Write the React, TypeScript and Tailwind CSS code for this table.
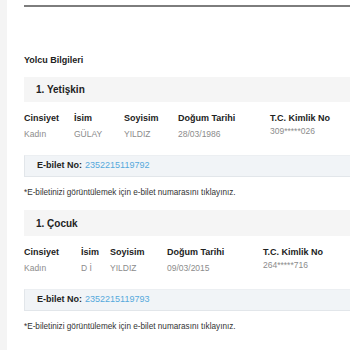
const font = { fontFamily: '"Liberation Sans", Arial, sans-serif' };

type Col = { label: string; value: string; width: string };

function PassengerBlock({ title, cols, ticket, bandH }: { title: string; cols: Col[]; ticket: string; bandH: string }) {
  return (
    <div>
      <div className={`mt-[11px] ${bandH} flex items-center pl-[12px] bg-[#f5f5f5]`}>
        <span className="text-[10px] font-bold text-[#222]">{title}</span>
      </div>
      <div className="flex mt-[10px]">
        {cols.map((c, i) => {
          const last = i === cols.length - 1;
          return (
            <div key={c.label} className={`${c.width} shrink-0 flex flex-col`}>
              <span className="text-[9px] leading-[12px] font-bold text-[#222] whitespace-nowrap">{c.label}</span>
              <span
                className={`text-[8.5px] leading-[12px] text-[#8c8c8c] whitespace-nowrap ${last ? "mt-[1px]" : "mt-[4px]"}`}
              >
                {c.value}
              </span>
            </div>
          );
        })}
      </div>
      <div className="mt-[15px] h-[22px] flex items-center pl-[12px] bg-[#f1f4f7] border border-r-0 border-[#e2e6ea] border-t-[#eceff2]">
        <span className="text-[9px] font-bold text-[#222]">E-bilet No:</span>
        <a className="ml-[3px] text-[9px] text-[#55a9dc] cursor-pointer">{ticket}</a>
      </div>
      <p className="mt-[10px] text-[8.2px] leading-[12px] text-[#333] whitespace-nowrap">
        *E-biletinizi görüntülemek için e-bilet numarasını tıklayınız.
      </p>
    </div>
  );
}

export default function App() {
  return (
    <div className="flex min-h-[350px] w-[350px] bg-white overflow-hidden" style={font}>
      <div className="w-[7px] shrink-0 bg-[#f4f4f4]" />
      <div className="flex-1 pl-[17px]">
        <div className="pt-[5px]">
          <div className="h-[2px] bg-[#7d7d7d]" />
        </div>
        <h2 className="mt-[47px] text-[9px] leading-[12px] font-bold text-[#222]">Yolcu Bilgileri</h2>
        <PassengerBlock
          title="1. Yetişkin"
          bandH="h-[25px]"
          ticket="2352215119792"
          cols={[
            { label: "Cinsiyet", value: "Kadın", width: "w-[50px]" },
            { label: "İsim", value: "GÜLAY", width: "w-[50px]" },
            { label: "Soyisim", value: "YILDIZ", width: "w-[54px]" },
            { label: "Doğum Tarihi", value: "28/03/1986", width: "w-[92px]" },
            { label: "T.C. Kimlik No", value: "309*****026", width: "w-[80px]" },
          ]}
        />
        <PassengerBlock
          title="1. Çocuk"
          bandH="h-[26px]"
          ticket="2352215119793"
          cols={[
            { label: "Cinsiyet", value: "Kadın", width: "w-[57px]" },
            { label: "İsim", value: "D İ", width: "w-[29px]" },
            { label: "Soyisim", value: "YILDIZ", width: "w-[57px]" },
            { label: "Doğum Tarihi", value: "09/03/2015", width: "w-[96px]" },
            { label: "T.C. Kimlik No", value: "264*****716", width: "w-[80px]" },
          ]}
        />
      </div>
    </div>
  );
}
